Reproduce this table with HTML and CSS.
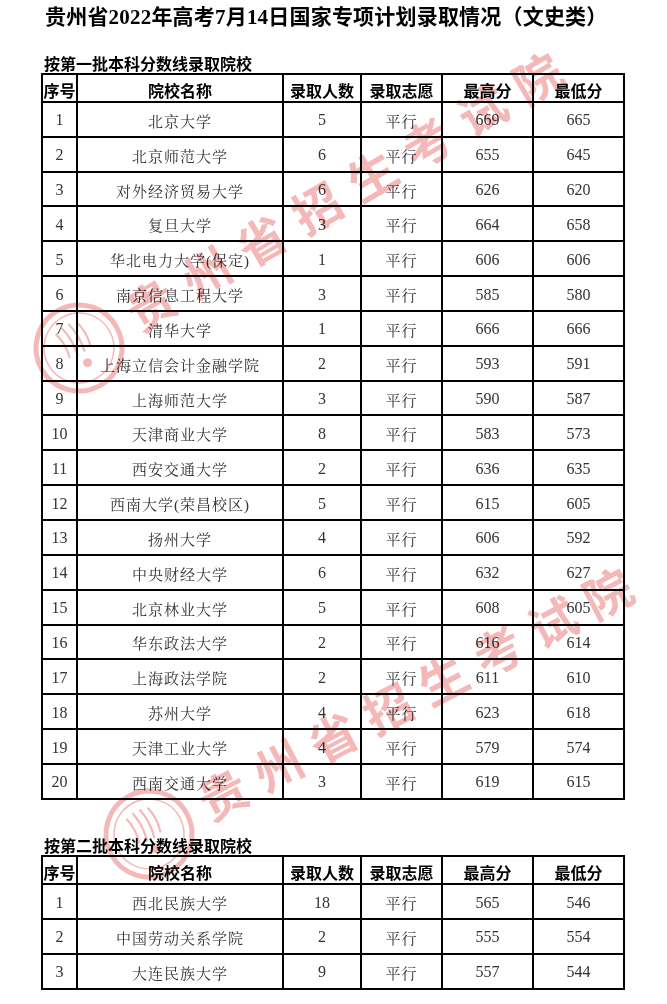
FILE: index.html
```html
<!DOCTYPE html>
<html lang="zh-CN">
<head>
<meta charset="utf-8">
<title>贵州省2022年高考7月14日国家专项计划录取情况（文史类）</title>
<link rel="stylesheet" href="styles.css">
</head>
<body>
<div class="page">
  <h1 class="title">贵州省2022年高考7月14日国家专项计划录取情况（文史类）</h1>

  <h2 class="subtitle">按第一批本科分数线录取院校</h2>
  <div class="tbl">
    <div class="th">序号</div><div class="th">院校名称</div><div class="th">录取人数</div><div class="th">录取志愿</div><div class="th">最高分</div><div class="th">最低分</div>
    <div class="td num">1</div><div class="td name">北京大学</div><div class="td num">5</div><div class="td name">平行</div><div class="td num">669</div><div class="td num">665</div>
    <div class="td num">2</div><div class="td name">北京师范大学</div><div class="td num">6</div><div class="td name">平行</div><div class="td num">655</div><div class="td num">645</div>
    <div class="td num">3</div><div class="td name">对外经济贸易大学</div><div class="td num">6</div><div class="td name">平行</div><div class="td num">626</div><div class="td num">620</div>
    <div class="td num">4</div><div class="td name">复旦大学</div><div class="td num">3</div><div class="td name">平行</div><div class="td num">664</div><div class="td num">658</div>
    <div class="td num">5</div><div class="td name">华北电力大学(保定)</div><div class="td num">1</div><div class="td name">平行</div><div class="td num">606</div><div class="td num">606</div>
    <div class="td num">6</div><div class="td name">南京信息工程大学</div><div class="td num">3</div><div class="td name">平行</div><div class="td num">585</div><div class="td num">580</div>
    <div class="td num">7</div><div class="td name">清华大学</div><div class="td num">1</div><div class="td name">平行</div><div class="td num">666</div><div class="td num">666</div>
    <div class="td num">8</div><div class="td name">上海立信会计金融学院</div><div class="td num">2</div><div class="td name">平行</div><div class="td num">593</div><div class="td num">591</div>
    <div class="td num">9</div><div class="td name">上海师范大学</div><div class="td num">3</div><div class="td name">平行</div><div class="td num">590</div><div class="td num">587</div>
    <div class="td num">10</div><div class="td name">天津商业大学</div><div class="td num">8</div><div class="td name">平行</div><div class="td num">583</div><div class="td num">573</div>
    <div class="td num">11</div><div class="td name">西安交通大学</div><div class="td num">2</div><div class="td name">平行</div><div class="td num">636</div><div class="td num">635</div>
    <div class="td num">12</div><div class="td name">西南大学(荣昌校区)</div><div class="td num">5</div><div class="td name">平行</div><div class="td num">615</div><div class="td num">605</div>
    <div class="td num">13</div><div class="td name">扬州大学</div><div class="td num">4</div><div class="td name">平行</div><div class="td num">606</div><div class="td num">592</div>
    <div class="td num">14</div><div class="td name">中央财经大学</div><div class="td num">6</div><div class="td name">平行</div><div class="td num">632</div><div class="td num">627</div>
    <div class="td num">15</div><div class="td name">北京林业大学</div><div class="td num">5</div><div class="td name">平行</div><div class="td num">608</div><div class="td num">605</div>
    <div class="td num">16</div><div class="td name">华东政法大学</div><div class="td num">2</div><div class="td name">平行</div><div class="td num">616</div><div class="td num">614</div>
    <div class="td num">17</div><div class="td name">上海政法学院</div><div class="td num">2</div><div class="td name">平行</div><div class="td num">611</div><div class="td num">610</div>
    <div class="td num">18</div><div class="td name">苏州大学</div><div class="td num">4</div><div class="td name">平行</div><div class="td num">623</div><div class="td num">618</div>
    <div class="td num">19</div><div class="td name">天津工业大学</div><div class="td num">4</div><div class="td name">平行</div><div class="td num">579</div><div class="td num">574</div>
    <div class="td num">20</div><div class="td name">西南交通大学</div><div class="td num">3</div><div class="td name">平行</div><div class="td num">619</div><div class="td num">615</div>
  </div>

  <h2 class="subtitle subtitle-second">按第二批本科分数线录取院校</h2>
  <div class="tbl">
    <div class="th">序号</div><div class="th">院校名称</div><div class="th">录取人数</div><div class="th">录取志愿</div><div class="th">最高分</div><div class="th">最低分</div>
    <div class="td num">1</div><div class="td name">西北民族大学</div><div class="td num">18</div><div class="td name">平行</div><div class="td num">565</div><div class="td num">546</div>
    <div class="td num">2</div><div class="td name">中国劳动关系学院</div><div class="td num">2</div><div class="td name">平行</div><div class="td num">555</div><div class="td num">554</div>
    <div class="td num">3</div><div class="td name">大连民族大学</div><div class="td num">9</div><div class="td name">平行</div><div class="td num">557</div><div class="td num">544</div>
  </div>

  <svg class="wm" width="667" height="1004" viewBox="0 0 667 1004" aria-hidden="true">
    <g transform="translate(79 348) rotate(-30.4)">
      <circle class="wm-line" r="43" stroke-width="5"/>
      <circle class="wm-line" r="35" stroke-width="1.5"/>
      <path class="wm-line" stroke-width="2.2" d="M-13 -24 Q-9 -10 -13 4 M-5 -26 Q-1 -10 -5 6 M3 -26 Q7 -10 3 6 M11 -24 Q15 -10 11 4"/>
      <circle class="wm-ink" cx="0" cy="17" r="4.5"/>
      <text class="wm-text" x="60" y="18">贵州省招生考试院</text>
    </g>
    <g transform="translate(149 834) rotate(-27.6)">
      <circle class="wm-line" r="43" stroke-width="5"/>
      <circle class="wm-line" r="35" stroke-width="1.5"/>
      <path class="wm-line" stroke-width="2.2" d="M-13 -24 Q-9 -10 -13 4 M-5 -26 Q-1 -10 -5 6 M3 -26 Q7 -10 3 6 M11 -24 Q15 -10 11 4"/>
      <circle class="wm-ink" cx="0" cy="17" r="4.5"/>
      <text class="wm-text wm-text-tight" x="60" y="18">贵州省招生考试院</text>
    </g>
  </svg>
</div>
</body>
</html>
```

FILE: styles.css
```css
html, body {
  margin: 0;
  padding: 0;
  background: #ffffff;
}

.page {
  position: relative;
  width: 667px;
  min-height: 1004px;
  padding-top: 5px;
  box-sizing: border-box;
}

.title {
  margin: 0;
  padding-left: 45px;
  font-family: "Liberation Serif", "Noto Sans CJK SC", serif;
  font-size: 21px;
  line-height: 24px;
  letter-spacing: 0.2px;
  font-weight: 700;
  color: #000;
  white-space: nowrap;
}

.subtitle {
  margin: 23.5px 0 0 0;
  padding-left: 44px;
  font-family: "Noto Sans CJK SC", sans-serif;
  font-size: 16px;
  line-height: 20px;
  font-weight: 700;
  color: #000;
}

.subtitle-second {
  margin-top: 35px;
}

.tbl {
  display: grid;
  grid-template-columns: 33px 204px 76px 79px 89px 89px;
  grid-template-rows: 26.4px;
  grid-auto-rows: 32.85px;
  gap: 2px;
  padding: 2px;
  margin-left: 41px;
  width: max-content;
  background: #000;
}

.th,
.td {
  background: #fff;
  display: flex;
  align-items: center;
  justify-content: center;
  white-space: nowrap;
  box-sizing: border-box;
}

.th {
  padding-top: 4px;
  font-family: "Noto Sans CJK SC", sans-serif;
  font-size: 16px;
  font-weight: 700;
  color: #000;
}

.td {
  padding-top: 2px;
  font-family: "Liberation Serif", "Noto Serif CJK SC", "Noto Sans CJK SC", serif;
  color: #333;
}

.num {
  font-size: 16px;
}

.name {
  font-size: 15px;
  letter-spacing: 1px;
  font-weight: 400;
}

.wm {
  position: absolute;
  top: 0;
  left: 0;
  pointer-events: none;
  mix-blend-mode: multiply;
  opacity: 0.42;
}

.wm-line {
  fill: none;
  stroke: #e65656;
}

.wm-ink {
  fill: #e65656;
}

.wm-text {
  fill: #e65656;
  font-family: "Noto Sans CJK SC", sans-serif;
  font-size: 48px;
  font-weight: 700;
  letter-spacing: 16px;
}

.wm-text-tight {
  letter-spacing: 14px;
}
```
